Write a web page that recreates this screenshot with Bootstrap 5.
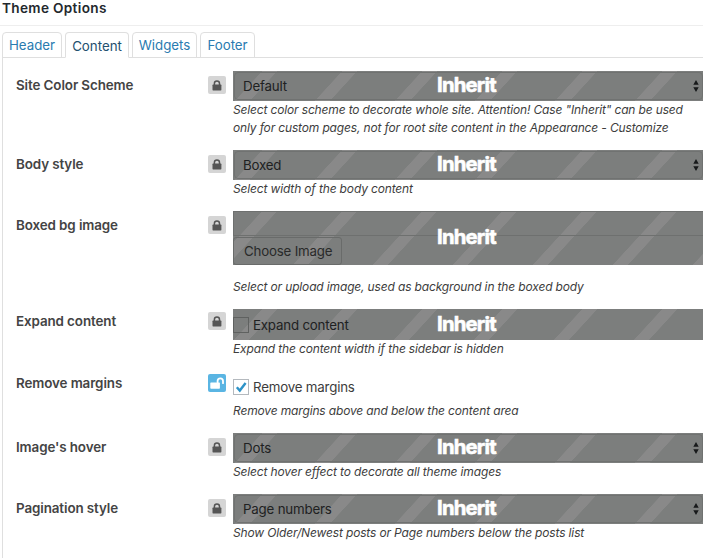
<!DOCTYPE html>
<html lang="en">
<head>
<meta charset="utf-8">
<title>Theme Options</title>
<meta name="viewport" content="width=device-width, initial-scale=1">
<link href="https://cdn.jsdelivr.net/npm/bootstrap@5.3.0/dist/css/bootstrap.min.css" rel="stylesheet">
<style>
body{font-family:Inter,"Open Sans",sans-serif;font-size:13.3px;line-height:18px;color:#3c3c3c;height:558px}
.page-title{font-size:13.6px;font-weight:600;color:#23282d;height:26px;line-height:16px;border-bottom:1px solid #eee;padding-left:2px;letter-spacing:.33px}
.opt-tabs{--bs-nav-tabs-border-width:0;height:32px;padding:6px 0 0 2px;gap:3px;flex-wrap:nowrap;border:0}
.opt-tabs .nav-link{height:26px;padding:0;line-height:25px;text-align:center;border:1px solid #dfdfdf;border-radius:4px 4px 0 0;color:#2a7bb0;margin:0}
.opt-tabs .nav-link.active{border-color:#dfdfdf;border-bottom-color:#fff;color:#24506f;line-height:27px;background:#fff}
.w-header .nav-link{width:60px}.w-content .nav-link{width:64px}.w-widgets .nav-link{width:65px}.w-footer .nav-link{width:55px}
.opt-panel{border:1px solid #dfdfdf;border-width:1px 0 0 1px;margin:-1px 0 0 2px;padding:13px 0 0 13px;height:501px}
.opt-row{height:61px}
.opt-row.tall{height:79px}.opt-row.media{height:98px}.opt-row.check{height:62px}
.opt-label{width:192px;font-weight:600;font-size:13.4px;letter-spacing:-.1px;color:#444;padding-top:5px}
.check .opt-label,.check .lock{margin-top:-2px}
.lock{width:18px;height:18px;border-radius:2px;background:#d5d5d5;margin-right:7px;transform:translateY(5px)}
.lock.open{background:#5ab5e3}
.lock svg{display:block}
.field{letter-spacing:-.19px;height:30px;background:repeating-linear-gradient(132.6deg,transparent 0,transparent 21.3px,#898989 21.8px,#898989 32.4px,transparent 32.9px,transparent 58.9px),#7c7e7d;color:#202122}
.check .field{height:31px}
.media .field{height:54px}
.free{height:31px;letter-spacing:-.19px}
.select-box{height:28px;margin:1px 0 0 1px;border:1px solid #707271;border-radius:4px;padding:0 3px 0 8px}
.text-box{height:25px;border:1px solid #6e706f;border-right:0}
.choose{width:109px;height:28px;margin-top:1px;border:1px solid #696b6a;border-radius:3px;padding-left:10px;line-height:26px;color:#292a2a}
.tick{width:16px;height:16px;border:1px solid #5f6160;margin:1px 4px 0 0}
.free .tick{border-color:#b4b9be;background:#fff}
.tick-text{line-height:1;padding-top:2px}
.inherit{left:204px;top:0;height:28px;display:flex;align-items:center;font-size:20.3px;font-weight:700;color:#fff;letter-spacing:-.8px;-webkit-text-stroke:.6px #fff}
.check .inherit{height:30px}.media .inherit{height:52px}
.hint{font-style:italic;font-size:12px;letter-spacing:-.15px;color:#3d3d3d;white-space:nowrap}
.media .hint{margin-top:13px}
</style>
<script src="https://cdn.jsdelivr.net/npm/bootstrap@5.3.0/dist/js/bootstrap.bundle.min.js"></script>
</head>
<body class="bg-white overflow-hidden">
<svg class="d-none"><defs>
<symbol id="i-lock" viewBox="0 0 18 18"><path d="M6.4 9V7.6a2.55 2.55 0 0 1 5.1 0V9" fill="none" stroke="#555" stroke-width="1.5"/><rect x="4.5" y="8.6" width="8.9" height="5.8" rx=".6" fill="#555"/></symbol>
<symbol id="i-open" viewBox="0 0 18 18"><path d="M9.6 8.6V7a2.7 2.7 0 0 1 5.4 0V9.2" fill="none" stroke="#fff" stroke-width="1.8" stroke-linecap="round"/><rect x="2.3" y="8.4" width="9.6" height="6.4" rx=".7" fill="#fff"/></symbol>
<symbol id="i-sort" viewBox="0 0 6 12"><path d="M3 0 5.7 4.7H.3zM3 12 .3 7.3h5.4z" fill="#17191a"/></symbol>
</defs></svg>
<h1 class="page-title m-0">Theme Options</h1>
<ul class="nav nav-tabs opt-tabs">
<li class="nav-item w-header"><a class="nav-link" href="#">Header</a></li>
<li class="nav-item w-content"><a class="nav-link active" href="#">Content</a></li>
<li class="nav-item w-widgets"><a class="nav-link" href="#">Widgets</a></li>
<li class="nav-item w-footer"><a class="nav-link" href="#">Footer</a></li>
</ul>
<main class="opt-panel">
<div class="opt-row tall d-flex"><div class="opt-label">Site Color Scheme</div><span class="lock"><svg width="18" height="18"><use href="#i-lock"/></svg></span>
<div class="flex-grow-1"><div class="field position-relative overflow-hidden"><div class="select-box d-flex align-items-center justify-content-between">Default<svg width="6" height="12"><use href="#i-sort"/></svg></div><span class="inherit position-absolute">Inherit</span></div>
<div class="hint">Select color scheme to decorate whole site. Attention! Case "Inherit" can be used<br>only for custom pages, not for root site content in the Appearance - Customize</div></div></div>

<div class="opt-row d-flex"><div class="opt-label">Body style</div><span class="lock"><svg width="18" height="18"><use href="#i-lock"/></svg></span>
<div class="flex-grow-1"><div class="field position-relative overflow-hidden"><div class="select-box d-flex align-items-center justify-content-between">Boxed<svg width="6" height="12"><use href="#i-sort"/></svg></div><span class="inherit position-absolute">Inherit</span></div>
<div class="hint">Select width of the body content</div></div></div>

<div class="opt-row media d-flex"><div class="opt-label">Boxed bg image</div><span class="lock"><svg width="18" height="18"><use href="#i-lock"/></svg></span>
<div class="flex-grow-1"><div class="field position-relative overflow-hidden"><div class="text-box"></div><div class="choose">Choose Image</div><span class="inherit position-absolute">Inherit</span></div>
<div class="hint">Select or upload image, used as background in the boxed body</div></div></div>

<div class="opt-row check d-flex"><div class="opt-label">Expand content</div><span class="lock"><svg width="18" height="18"><use href="#i-lock"/></svg></span>
<div class="flex-grow-1"><div class="field position-relative d-flex align-items-center"><span class="tick"></span><span class="tick-text">Expand content</span><span class="inherit position-absolute">Inherit</span></div>
<div class="hint">Expand the content width if the sidebar is hidden</div></div></div>

<div class="opt-row check d-flex"><div class="opt-label">Remove margins</div><span class="lock open"><svg width="18" height="18"><use href="#i-open"/></svg></span>
<div class="flex-grow-1"><div class="free d-flex align-items-center"><span class="tick d-flex"><svg width="14" height="14" viewBox="0 0 14 14"><path d="M2.8 7.2 5.8 10.6 11.6 3" fill="none" stroke="#2e93c8" stroke-width="2.4"/></svg></span><span class="tick-text">Remove margins</span></div>
<div class="hint">Remove margins above and below the content area</div></div></div>

<div class="opt-row d-flex"><div class="opt-label">Image's hover</div><span class="lock"><svg width="18" height="18"><use href="#i-lock"/></svg></span>
<div class="flex-grow-1"><div class="field position-relative overflow-hidden"><div class="select-box d-flex align-items-center justify-content-between">Dots<svg width="6" height="12"><use href="#i-sort"/></svg></div><span class="inherit position-absolute">Inherit</span></div>
<div class="hint">Select hover effect to decorate all theme images</div></div></div>

<div class="opt-row d-flex"><div class="opt-label">Pagination style</div><span class="lock"><svg width="18" height="18"><use href="#i-lock"/></svg></span>
<div class="flex-grow-1"><div class="field position-relative overflow-hidden"><div class="select-box d-flex align-items-center justify-content-between">Page numbers<svg width="6" height="12"><use href="#i-sort"/></svg></div><span class="inherit position-absolute">Inherit</span></div>
<div class="hint">Show Older/Newest posts or Page numbers below the posts list</div></div></div>
</main>
</body>
</html>
